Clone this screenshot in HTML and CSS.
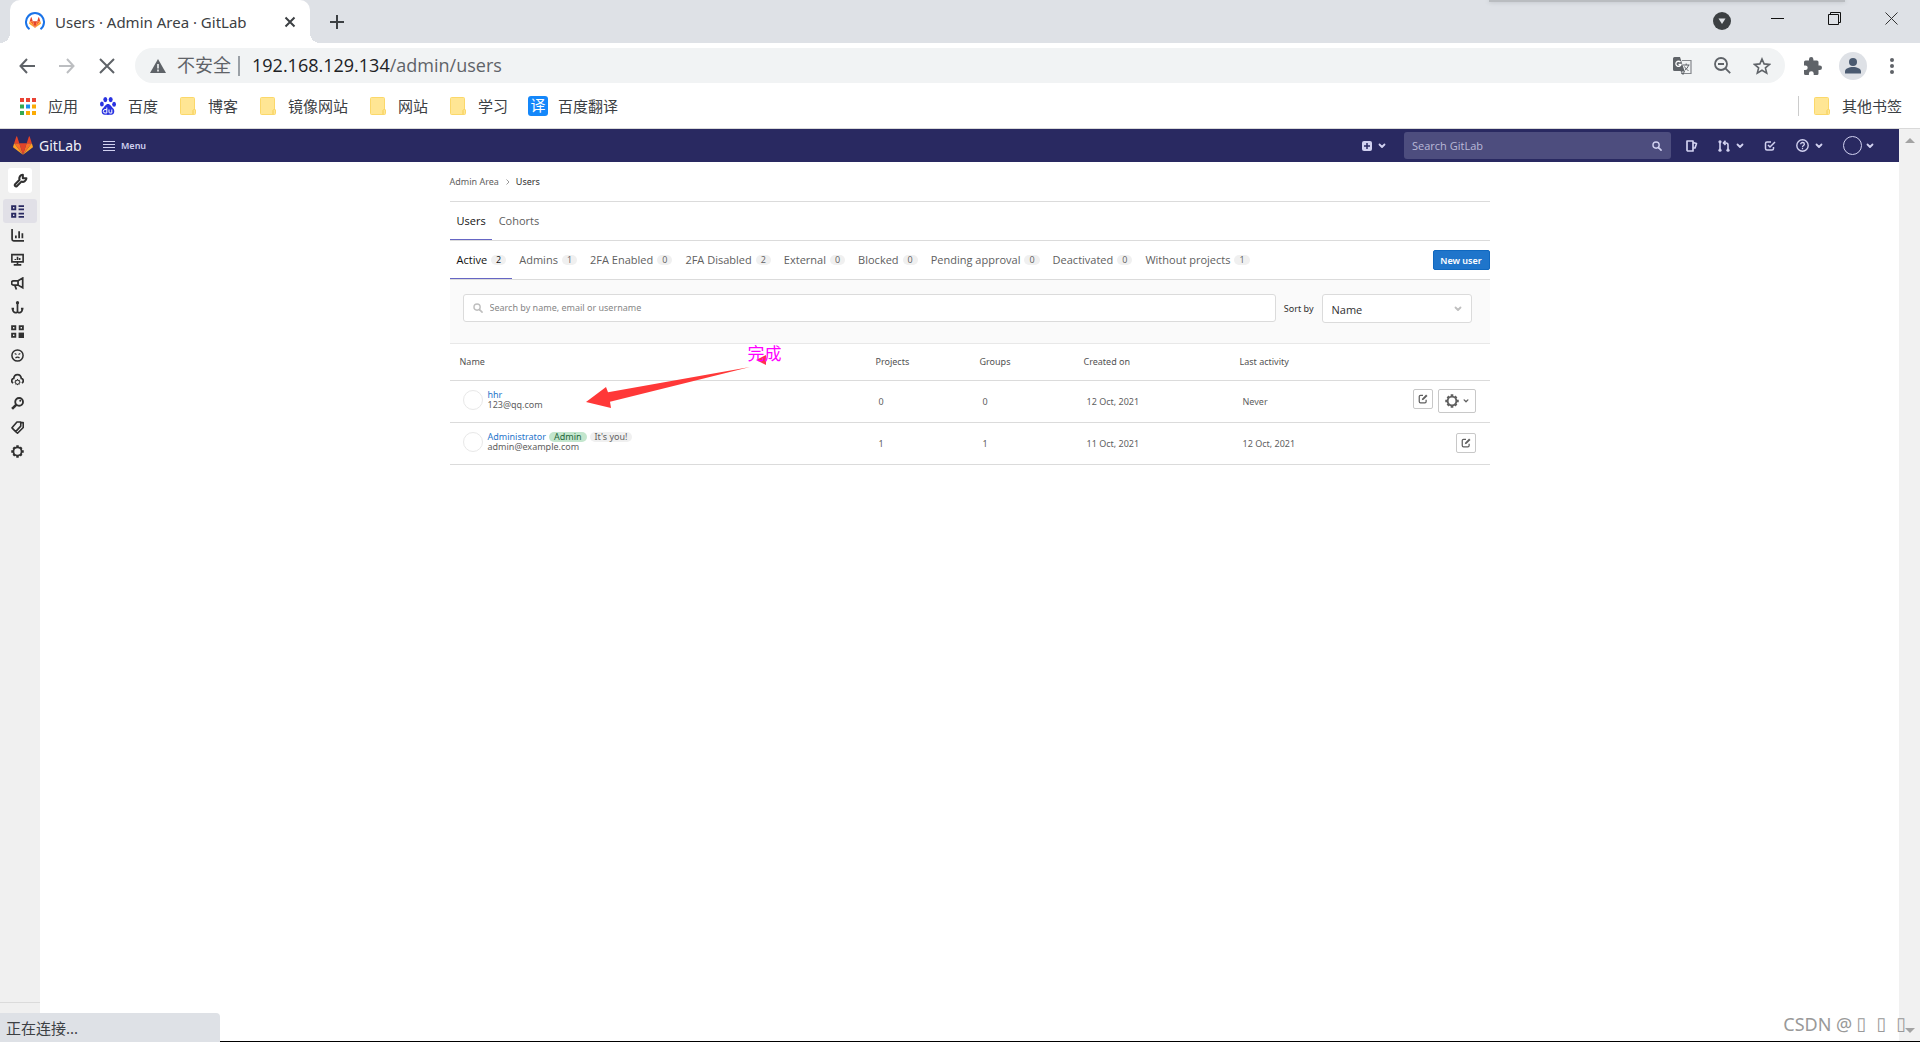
FILE: index.html
```html
<!DOCTYPE html>
<html lang="zh-CN">
<head>
<meta charset="utf-8">
<title>Users · Admin Area · GitLab</title>
<link rel="stylesheet" href="styles.css">
</head>
<body>
<svg class="defs" aria-hidden="true">
  <defs>
    <symbol id="tanuki" viewBox="0 0 24 22">
      <path fill="#e24329" d="M12 22 7.600 8.400h8.800z"/>
      <path fill="#fc6d26" d="M12 22 7.600 8.400H1.400zM12 22l4.400-13.600h6.200z"/>
      <path fill="#fca326" d="M1.400 8.400.1 12.500a.9.900 0 0 0 .3 1L12 22zM22.600 8.400l1.300 4.100a.9.900 0 0 1-.3 1L12 22z"/>
      <path fill="#e24329" d="M1.400 8.400h6.200L4.900.3a.5.5 0 0 0-.9 0zM22.600 8.400h-6.200L19.100.3a.5.5 0 0 1 .9 0z"/>
    </symbol>
    <symbol id="chevron" viewBox="0 0 8 8"><path d="M1.500 2.500 4 5l2.500-2.500" fill="none" stroke="currentColor" stroke-width="1.800" stroke-linecap="round" stroke-linejoin="round"/></symbol>
    <symbol id="folder" viewBox="0 0 16 18"><path fill="#ffe694" stroke="#fbd86a" d="M1.500.5h12a1 1 0 0 1 1 1v10.500l1 1v3.500a1 1 0 0 1-1 1h-13a1 1 0 0 1-1-1v-15a1 1 0 0 1 1-1z"/><path fill="none" stroke="#f4cc52" d="M13 17v-3.500l1.500-1.500"/></symbol>
    <symbol id="search" viewBox="0 0 16 16"><circle cx="6.500" cy="6.500" r="5" fill="none" stroke="currentColor" stroke-width="2.200"/><path d="m10.500 10.500 4 4" stroke="currentColor" stroke-width="2.600" stroke-linecap="round"/></symbol>
    <symbol id="edit" viewBox="0 0 16 16"><path d="M8 2H4a2 2 0 0 0-2 2v8a2 2 0 0 0 2 2h7a2 2 0 0 0 2-2V9" fill="none" stroke="currentColor" stroke-width="2"/><path d="M13 .8 15.200 3 9 9.200l-3 .8.800-3z" fill="currentColor"/></symbol>
    <symbol id="gear" viewBox="0 0 16 16"><circle cx="8" cy="8" r="5" fill="none" stroke="currentColor" stroke-width="2.200"/><path d="M8 .3v3M8 12.700v3M.3 8h3M12.700 8h3M2.900 2.900l1.600 1.600M11.500 11.500l1.600 1.600M13.100 2.900l-1.600 1.600M4.500 11.500l-1.600 1.600" stroke="currentColor" stroke-width="3"/></symbol>
  </defs>
</svg>

<div class="window">
  <header class="tabstrip">
    <div class="tab">
      <svg class="favicon" viewBox="0 0 20 20"><path d="M4.500 17.200a9 9 0 1 1 11 0" fill="none" stroke="#1a73e8" stroke-width="2"/><use href="#tanuki" x="4" y="5" width="12" height="11"/></svg>
      <span class="tab-title">Users · Admin Area · GitLab</span>
      <button class="plain" aria-label="Close tab"><svg width="12" height="12" viewBox="0 0 12 12"><path d="m1.500 1.500 9 9M10.500 1.500l-9 9" stroke="#3c4043" stroke-width="2"/></svg></button>
    </div>
    <button class="plain newtab" aria-label="New tab"><svg width="16" height="16" viewBox="0 0 16 16"><path d="M8 1v14M1 8h14" stroke="#3c4043" stroke-width="2"/></svg></button>
    <div class="window-buttons">
      <button class="plain tab-search" aria-label="Search tabs"><svg width="18" height="18" viewBox="0 0 18 18"><circle cx="9" cy="9" r="9" fill="#3c4043"/><path d="M5.500 6.500h7L9 12z" fill="#dee1e6"/></svg></button>
      <button class="plain" aria-label="Minimize"><svg width="13" height="13" viewBox="0 0 13 13"><path d="M0 6.500h13" stroke="#111"/></svg></button>
      <button class="plain" aria-label="Restore"><svg width="13" height="13" viewBox="0 0 13 13"><path d="M.5 2.500h10v10H.5zM2.500 2.500v-2h10v10h-2" fill="none" stroke="#111"/></svg></button>
      <button class="plain" aria-label="Close"><svg width="13" height="13" viewBox="0 0 13 13"><path d="m.5.5 12 12M12.500.5l-12 12" stroke="#333"/></svg></button>
    </div>
    <div class="top-shadow"></div>
  </header>

  <div class="toolbar">
    <div class="nav-buttons">
      <button class="plain" aria-label="Back"><svg width="16" height="16" viewBox="0 0 16 16"><path d="M16 8H1.500M8 1 1.500 8 8 15" fill="none" stroke="#5f6368" stroke-width="2"/></svg></button>
      <button class="plain" aria-label="Forward"><svg width="16" height="16" viewBox="0 0 16 16"><path d="M0 8h14.500M8 1l6.500 7L8 15" fill="none" stroke="#bcbec1" stroke-width="2"/></svg></button>
      <button class="plain" aria-label="Stop"><svg width="16" height="16" viewBox="0 0 16 16"><path d="m1 1 14 14M15 1 1 15" stroke="#5f6368" stroke-width="2"/></svg></button>
    </div>
    <div class="omnibox">
      <svg width="16" height="14" viewBox="0 0 16 14"><path d="M8 0l8 14H0z" fill="#5f6368"/><path d="M8 5v4.500M8 10.500v2" stroke="#f1f3f4" stroke-width="1.600"/></svg>
      <span class="insecure">不安全</span>
      <span class="url-divider"></span>
      <span class="url"><b>192.168.129.134</b>/admin/users</span>
      <div class="omnibox-icons">
        <svg width="19" height="18" viewBox="0 0 19 18"><path d="M9 3.500h9v13H8" fill="#f1f3f4" stroke="#85888c" stroke-width="1.200"/><path d="M0 1.500A1.500 1.500 0 0 1 1.500 0H7l4.500 14H1.500A1.500 1.500 0 0 1 0 12.500z" fill="#5f6368"/><path d="M7.500 5.200A2.600 2.600 0 1 0 8 7.500H5.500" fill="none" stroke="#fff" stroke-width="1.300"/><path d="M10 8h6.500M13.200 6.500V8M15.500 8c-.5 2.500-2 4-3.500 5M11.500 9.500c1 2 2.500 3.500 4 4M8 14l2 3.500 1.500-3.500z" fill="none" stroke="#5f6368"/></svg>
        <svg width="17" height="17" viewBox="0 0 17 17"><circle cx="7" cy="7" r="6" fill="none" stroke="#5f6368" stroke-width="1.800"/><path d="M4 7h6M11.200 11.200l5 5" stroke="#5f6368" stroke-width="1.800"/></svg>
        <svg width="18" height="18" viewBox="0 0 18 18"><path d="m9 2 2.100 4.900 5.400.5-4.100 3.500 1.300 5.200L9 13.300l-4.700 2.800 1.300-5.200-4.100-3.500 5.400-.5z" fill="none" stroke="#5f6368" stroke-width="1.600"/></svg>
      </div>
    </div>
    <div class="toolbar-end">
      <button class="plain" aria-label="Extensions"><svg width="18" height="18" viewBox="0 0 18 18"><path d="M0 5a1.500 1.500 0 0 1 1.500-1.500H5V2.200a2.200 2.200 0 0 1 4.400 0v1.300H13A1.500 1.500 0 0 1 14.500 5v3.500h1.300a2.200 2.200 0 0 1 0 4.400h-1.300v3.600A1.500 1.500 0 0 1 13 18H9.700v-1.400a2.400 2.400 0 0 0-4.800 0V18H1.500A1.500 1.500 0 0 1 0 16.500v-3.400h1.400a2.300 2.300 0 0 0 0-4.600H0z" fill="#5f6368"/></svg></button>
      <button class="plain" aria-label="Profile"><svg width="28" height="28" viewBox="0 0 28 28"><circle cx="14" cy="14" r="14" fill="#dee1e6"/><circle cx="14" cy="10" r="4" fill="#4a5a70"/><path d="M6 21.500v-2c0-3 4-4.500 8-4.500s8 1.500 8 4.500v2z" fill="#4a5a70"/></svg></button>
      <button class="plain" aria-label="Browser menu"><svg width="4" height="16" viewBox="0 0 4 16"><circle cx="2" cy="2" r="2" fill="#5f6368"/><circle cx="2" cy="8" r="2" fill="#5f6368"/><circle cx="2" cy="14" r="2" fill="#5f6368"/></svg></button>
    </div>
  </div>

  <nav class="bookmarks" aria-label="Bookmarks">
    <a href="#"><svg width="16" height="17" viewBox="0 0 16 17"><path fill="#ea4335" d="M0 0h4v4H0zM6 0h4v4H6zM12 0h4v4h-4z"/><path fill="#34a853" d="M0 6.500h4v4H0zM0 13h4v4H0z"/><path fill="#1a8cf0" d="M6 6.500h4v4H6z"/><path fill="#fbab05" d="M12 6.500h4v4h-4zM6 13h4v4H6zM12 13h4v4h-4z"/></svg>应用</a>
    <a href="#"><svg width="16" height="18" viewBox="0 0 16 18"><g fill="#2932e1"><ellipse cx="5.300" cy="2.600" rx="2" ry="2.600"/><ellipse cx="10.700" cy="2.600" rx="2" ry="2.600"/><ellipse cx="1.900" cy="7" rx="1.900" ry="2.500"/><ellipse cx="14.100" cy="7.200" rx="1.900" ry="2.500"/><path d="M8 7c2.500 0 3 2.500 5 4.200 2.200 2 1.500 6.300-1.500 6.600-1.500.1-5.500.1-7 0-3-.3-3.700-4.600-1.500-6.600C5 9.500 5.500 7 8 7z"/></g><path d="M6.800 10.500v5.500H5a1.400 1.400 0 0 1 0-3.400h1.800M9 12.500v2.500c0 .8.400 1 1 1h1.800v-3.500" fill="none" stroke="#fff"/></svg>百度</a>
    <a href="#"><svg width="16" height="18"><use href="#folder"/></svg>博客</a>
    <a href="#"><svg width="16" height="18"><use href="#folder"/></svg>镜像网站</a>
    <a href="#"><svg width="16" height="18"><use href="#folder"/></svg>网站</a>
    <a href="#"><svg width="16" height="18"><use href="#folder"/></svg>学习</a>
    <a href="#" class="translate"><span class="yi">译</span>百度翻译</a>
    <a href="#" class="other"><svg width="16" height="18"><use href="#folder"/></svg>其他书签</a>
  </nav>

  <div class="viewport">
    <div class="app">
      <header class="navbar">
        <a href="#" class="brand"><svg width="20" height="19"><use href="#tanuki"/></svg>GitLab</a>
        <button class="menu"><svg width="12" height="10" viewBox="0 0 12 10"><path d="M0 .5h12M0 3.500h12M0 6.500h12M0 9.500h12" stroke="currentColor" stroke-width="1.200"/></svg>Menu</button>
        <div class="navbar-end">
          <button class="drop" aria-label="New"><svg width="10" height="10" viewBox="0 0 10 10"><rect width="10" height="10" rx="2" fill="currentColor"/><path d="M5 2v6M2 5h6" stroke="#292961" stroke-width="1.500"/></svg><svg class="chev"><use href="#chevron"/></svg></button>
          <label class="nav-search"><input type="text" placeholder="Search GitLab" aria-label="Search GitLab"><svg width="10" height="10"><use href="#search"/></svg></label>
          <div class="nav-icons">
            <a href="#" aria-label="Issues"><svg width="12" height="12" viewBox="0 0 12 12"><path d="M1 1h6v10H2a1 1 0 0 1-1-1zM7 2.500l3.500 1L9 8H7" fill="none" stroke="currentColor" stroke-width="1.700" stroke-linejoin="round"/></svg></a>
            <button class="drop" aria-label="Merge requests"><svg width="12" height="12" viewBox="0 0 12 12"><path d="M2 2v8M10 10V5a2 2 0 0 0-2-2H6M7.500.8 5.500 3l2 2" fill="none" stroke="currentColor" stroke-width="1.600"/><circle cx="2" cy="1.800" r="1.600" fill="currentColor"/><circle cx="2" cy="10.200" r="1.600" fill="currentColor"/><circle cx="10" cy="10.200" r="1.600" fill="currentColor"/></svg><svg class="chev"><use href="#chevron"/></svg></button>
            <a href="#" aria-label="To-Do List"><svg width="12" height="12" viewBox="0 0 12 12"><path d="M7 2H3a1.500 1.500 0 0 0-1.500 1.500v5A1.500 1.500 0 0 0 3 10h5a1.500 1.500 0 0 0 1.500-1.500V7M4 5l2 2 5-5" fill="none" stroke="currentColor" stroke-width="1.500"/></svg></a>
            <button class="drop" aria-label="Help"><svg width="13" height="13" viewBox="0 0 13 13"><circle cx="6.500" cy="6.500" r="5.700" fill="none" stroke="currentColor" stroke-width="1.400"/><path d="M4.700 5.200c0-2.300 3.700-2.200 3.700 0 0 1.400-1.900 1.200-1.900 2.700M6.500 8.800v1.400" fill="none" stroke="currentColor" stroke-width="1.300"/></svg><svg class="chev"><use href="#chevron"/></svg></button>
            <button class="drop account" aria-label="Account"><span class="me"></span><svg class="chev"><use href="#chevron"/></svg></button>
          </div>
        </div>
      </header>

      <div class="body">
        <nav class="sidebar" aria-label="Admin">
          <a href="#" class="context" aria-label="Admin Area"><svg viewBox="0 0 16 16"><path d="M10.500 5.500v-3.700A4 4 0 0 0 7 7.200L2 12.200A1.500 1.500 0 0 0 4 14.200l5-5a4 4 0 0 0 5.300-3.700h-3.800z" fill="none" stroke="currentColor" stroke-width="2.200" stroke-linejoin="round"/></svg></a>
          <a href="#" class="active" aria-label="Overview"><svg viewBox="0 0 12 12"><path d="M1 1h3v3H1zM1 8h3v3H1z" fill="none" stroke="currentColor" stroke-width="1.700"/><path d="M7 1h5M7 4h5M7 8h5M7 11h5" stroke="currentColor" stroke-width="1.500"/></svg></a>
          <a href="#" aria-label="Analytics"><svg viewBox="0 0 12 12"><path d="M1 0v9.500a1.500 1.500 0 0 0 1.500 1.500H12M4.500 8.500V6M7.500 8.500V2M10.500 8.500V4" fill="none" stroke="currentColor" stroke-width="1.600"/></svg></a>
          <a href="#" aria-label="Monitoring"><svg viewBox="0 0 12 12"><path d="M.8 1.500h10.400v6.700H.8zM6 8v3M2.500 11h7M4 6.500V5.500M6 6.500v-3M8 6.500V4.500" fill="none" stroke="currentColor" stroke-width="1.500"/></svg></a>
          <a href="#" aria-label="Messages"><svg viewBox="0 0 12 12"><path d="M10.800 1v9L6.500 7.500V3.500zM6.500 3.500H2.500a1.500 1.500 0 0 0 0 4h4M3.500 7.500 5 11.500" fill="none" stroke="currentColor" stroke-width="1.600"/></svg></a>
          <a href="#" aria-label="System hooks"><svg viewBox="0 0 12 12"><path d="M6 2v8.500M.5 7h2.300M11.500 7H9.200M1.500 7c0 4.500 4.500 4.500 4.500 2.500 0 2 4.500 2 4.500-2.500" fill="none" stroke="currentColor" stroke-width="1.600"/><circle cx="6" cy="1.500" r="1.500" fill="currentColor"/></svg></a>
          <a href="#" aria-label="Applications"><svg viewBox="0 0 12 12"><path d="M1 1h3v3H1zM8 1h3v3H8zM1 8h3v3H1z" fill="none" stroke="currentColor" stroke-width="1.700"/><path d="M7 7h5v5H7z" fill="currentColor"/></svg></a>
          <a href="#" aria-label="Abuse reports"><svg viewBox="0 0 13 13"><circle cx="6.500" cy="6.500" r="5.600" fill="none" stroke="currentColor" stroke-width="1.500"/><path d="M3.700 4.500 5.500 5.500M9.300 4.500 7.500 5.500M4.500 9.200c1-1.500 3-1.500 4 0" fill="none" stroke="currentColor" stroke-width="1.200"/></svg></a>
          <a href="#" aria-label="Kubernetes"><svg viewBox="0 0 12 12"><path d="M2 9.300C0 8.300.3 5.300 2.500 5 3 .2 9 .2 9.500 5c2.200.3 2.500 3.300.5 4.300" fill="none" stroke="currentColor" stroke-width="1.600"/><use href="#gear" x="3" y="5.500" width="6" height="6"/></svg></a>
          <a href="#" aria-label="Deploy keys"><svg viewBox="0 0 12 12"><circle cx="7.500" cy="4.500" r="3.600" fill="none" stroke="currentColor" stroke-width="1.700"/><path d="M5 7 1 11" stroke="currentColor" stroke-width="2.400"/><circle cx="8.500" cy="3.500" r=".9" fill="currentColor"/></svg></a>
          <a href="#" aria-label="Labels"><svg viewBox="0 0 12 12"><path d="M5.500.9H9v3.800L4.300 9.800.9 6.300zM9.500 1.500h1.800V6L6 11.300 4.300 9.800" fill="none" stroke="currentColor" stroke-width="1.500" stroke-linejoin="round"/></svg></a>
          <a href="#" aria-label="Settings"><svg viewBox="0 0 16 16"><use href="#gear"/></svg></a>
          <button class="collapse" aria-label="Collapse sidebar"></button>
        </nav>

        <main class="content">
          <nav class="crumbs" aria-label="Breadcrumb"><a href="#">Admin Area</a><svg width="5" height="6" viewBox="0 0 5 6"><path d="m1.500.5 2.500 2.500-2.500 2.500" fill="none" stroke="#999"/></svg><a href="#" class="here">Users</a></nav>
          <nav class="tabs" aria-label="Sections"><a href="#" class="on">Users</a><a href="#">Cohorts</a></nav>
          <div class="filters">
            <nav class="tabs" aria-label="Filters">
              <a href="#" class="on">Active <span class="count">2</span></a>
              <a href="#">Admins <span class="count">1</span></a>
              <a href="#">2FA Enabled <span class="count">0</span></a>
              <a href="#">2FA Disabled <span class="count">2</span></a>
              <a href="#">External <span class="count">0</span></a>
              <a href="#">Blocked <span class="count">0</span></a>
              <a href="#">Pending approval <span class="count">0</span></a>
              <a href="#">Deactivated <span class="count">0</span></a>
              <a href="#">Without projects <span class="count">1</span></a>
            </nav>
            <button class="new-user">New user</button>
          </div>
          <form class="search-row">
            <label class="search-box"><svg width="10" height="10"><use href="#search"/></svg><input type="text" placeholder="Search by name, email or username" aria-label="Search users"></label>
            <label for="sort">Sort by</label>
            <div class="sort"><select id="sort"><option>Name</option></select><svg class="chev"><use href="#chevron"/></svg></div>
          </form>
          <table class="users">
            <colgroup><col class="w40"><col class="w10"><col class="w10"><col class="w15"><col class="w15"><col class="w10"></colgroup>
            <thead><tr><th>Name</th><th>Projects</th><th>Groups</th><th>Created on</th><th>Last activity</th><th></th></tr></thead>
            <tbody>
              <tr>
                <td class="who"><div class="user"><span class="avatar"></span><div><div class="line"><a href="#">hhr</a></div><div class="line">123@qq.com</div></div></div></td>
                <td>0</td><td>0</td><td>12 Oct, 2021</td><td>Never</td>
                <td class="act"><div class="actions"><button class="box" aria-label="Edit"><svg width="10" height="10"><use href="#edit"/></svg></button><button class="box wide" aria-label="User administration"><svg width="14" height="14"><use href="#gear"/></svg><svg class="chev small"><use href="#chevron"/></svg></button></div></td>
              </tr>
              <tr>
                <td class="who"><div class="user"><span class="avatar"></span><div><div class="line"><a href="#">Administrator</a><span class="badge green">Admin</span><span class="badge">It's you!</span></div><div class="line">admin@example.com</div></div></div></td>
                <td>1</td><td>1</td><td>11 Oct, 2021</td><td>12 Oct, 2021</td>
                <td class="act"><div class="actions"><button class="box" aria-label="Edit"><svg width="10" height="10"><use href="#edit"/></svg></button></div></td>
              </tr>
            </tbody>
          </table>
          <div class="annotation">
            <svg width="180" height="68" viewBox="0 0 180 68"><path d="M164 27 22 52.300 20 47 0 62l25 6-1-6.300z" fill="#ff3838"/><path d="m170 20 10-5v10z" fill="#ff3050"/></svg>
            <span>完成</span>
          </div>
        </main>
      </div>
    </div>
    <div class="scrollbar"><i class="up"></i><i class="down"></i></div>
    <div class="status">正在连接...</div>
    <div class="watermark">CSDN @<span>▯</span><span>▯</span><span>▯</span></div>
  </div>
</div>
</body>
</html>
```
FILE: styles.css
```css
* { box-sizing: border-box; }
body {
  margin: 0;
  background: #fff;
  font-family: "Noto Sans", "Noto Sans CJK SC", sans-serif;
  font-size: 9px;
  color: #606060;
}
a { color: inherit; text-decoration: none; }
button, input, select { font: inherit; color: inherit; margin: 0; }
svg { flex: none; display: block; }
.defs { position: absolute; width: 0; height: 0; }
.plain { border: 0; padding: 0; background: none; display: flex; }
.window { display: flex; flex-direction: column; min-height: 100vh; }

/* Browser tab strip */
.tabstrip { position: relative; display: flex; height: 43px; background: #dee1e6; padding-left: 10px; overflow: hidden; }
.tab { position: relative; display: flex; align-items: center; width: 300px; padding: 0 14px 0 15px; background: #fff; border-radius: 10px 10px 0 0; }
.tab::before, .tab::after { content: ""; position: absolute; bottom: 0; width: 10px; height: 10px; }
.tab::before { left: -10px; background: radial-gradient(circle at 0 0, transparent 10px, #fff 10px); }
.tab::after { right: -10px; background: radial-gradient(circle at 100% 0, transparent 10px, #fff 10px); }
.favicon { width: 20px; height: 20px; margin-right: 10px; }
.tab-title { flex: 1; font-size: 15px; color: #3c4043; white-space: nowrap; }
.newtab { margin-left: 19px; align-items: center; }
.window-buttons { display: flex; gap: 44px; margin-left: auto; padding: 12px 22px 0 0; }
.window-buttons .plain { height: 18px; }
.window-buttons .tab-search { margin-right: -4px; }
.top-shadow { position: absolute; top: 0; right: 75px; width: 356px; height: 2px; background: #b9bcc0; box-shadow: 0 0 4px #b0b3b8; }

/* Address bar */
.toolbar { display: flex; align-items: center; height: 45px; padding: 0 26px 0 19px; }
.nav-buttons { display: flex; gap: 24px; width: 116px; }
.omnibox { display: flex; flex: 1; align-items: center; height: 35px; padding: 0 14px 0 15px; border-radius: 18px; background: #f1f3f4; font-family: "Open Sans", "Noto Sans CJK SC", sans-serif; font-size: 18px; color: #5f6368; white-space: nowrap; }
.insecure, .url { padding-bottom: 2px; line-height: 24px; }
.insecure { margin-left: 11px; }
.url-divider { width: 2px; height: 20px; margin: 0 12px 0 7px; background: #9aa0a6; }
.url b { color: #202124; font-weight: 400; }
.omnibox-icons { display: flex; align-items: center; gap: 22px; margin-left: auto; }
.toolbar-end { display: flex; align-items: center; gap: 17px; margin-left: 19px; }
.toolbar-end .plain:last-child { margin-left: 6px; }

/* Bookmarks */
.bookmarks { display: flex; align-items: center; gap: 22px; height: 41px; padding: 0 18px 4px 20px; border-bottom: 1px solid #d9d9d9; font-size: 15px; color: #3c4043; }
.bookmarks a { display: flex; align-items: center; gap: 12px; line-height: 20px; }
.bookmarks .translate { gap: 10px; margin-left: -2px; }
.yi { width: 20px; height: 20px; border-radius: 3px; background: #1487fa; color: #fff; text-align: center; font-size: 15px; line-height: 19px; }
.bookmarks .other { margin-left: auto; padding-left: 15px; border-left: 1px solid #ccc; }

/* Page area */
.viewport { position: relative; display: flex; flex: 1; border-bottom: 1px solid #000; }
.app { display: flex; flex-direction: column; flex: 1; }
.scrollbar { display: flex; flex-direction: column; justify-content: space-between; align-items: center; width: 21px; padding: 9px 0 8px; background: #f1f1f1; }
.scrollbar i { border: 5px solid transparent; }
.scrollbar .up { border-top: 0; border-bottom-color: #a3a3a3; }
.scrollbar .down { border-bottom: 0; border-top-color: #a3a3a3; }

/* GitLab navbar */
.navbar { display: flex; align-items: center; height: 33px; padding: 0 25px 0 13px; background: #292961; color: #d1d1f0; }
.brand { display: flex; align-items: center; gap: 6px; width: 90px; color: #f0f0f8; font-size: 14px; }
.menu { display: flex; align-items: center; gap: 6px; padding: 0; border: 0; background: none; font-weight: 600; }
.navbar-end { display: flex; align-items: center; margin-left: auto; }
.drop { display: flex; align-items: center; gap: 6px; padding: 0; border: 0; background: none; }
.chev { width: 8px; height: 8px; }
.nav-search { display: flex; align-items: center; width: 267px; height: 27px; margin: 0 15px 0 18px; padding: 0 9px 0 8px; border-radius: 3px; background: #4d4d7e; font-family: "Open Sans", sans-serif; }
.nav-search input { flex: 1; min-width: 0; padding: 0; border: 0; outline: 0; background: none; font-size: 11px; }
.nav-search input::placeholder { color: #b9b9d8; opacity: 1; }
.nav-icons { display: flex; align-items: center; gap: 20px; }
.me { width: 19px; height: 19px; border: 1px solid #d1d1f0; border-radius: 50%; }
.account { gap: 4px; }

/* GitLab sidebar */
.body { display: flex; flex: 1; }
.sidebar { display: flex; flex-direction: column; width: 40px; background: #f0f0f0; color: #303030; }
.sidebar a { display: flex; align-items: center; height: 24px; margin: 0 3px; padding-left: 8px; border-radius: 3px; }
.sidebar svg { width: 13px; height: 13px; }
.sidebar .context { height: 25px; margin: 6px 8px; padding-left: 5px; background: #fff; }
.sidebar .context svg { width: 15px; height: 15px; }
.sidebar .active { background: #e1e0e7; color: #292961; }
.collapse { height: 39px; margin-top: auto; border: 0; border-top: 1px solid #dbdbdb; background: none; }

/* Users page */
.content { position: relative; width: 100%; max-width: 1040px; margin: 0 auto; }
.crumbs { display: flex; align-items: center; gap: 6px; height: 40px; border-bottom: 1px solid #dbdbdb; }
.crumbs .here { color: #303030; }
.tabs { display: flex; height: 39px; border-bottom: 1px solid #dbdbdb; font-family: "Open Sans", sans-serif; font-size: 11px; }
.tabs a { display: flex; align-items: center; gap: 4px; height: 38px; padding: 0 6px 0 7px; border-bottom: 1px solid transparent; white-space: nowrap; }
.tabs .on { border-color: #6666c4; color: #111; }
.count { padding: 0 5px; border-radius: 5px; background: #f0f0f0; font-size: 9px; line-height: 10px; }
.filters { display: flex; align-items: center; border-bottom: 1px solid #dbdbdb; height: 39px; }
.filters .tabs { height: 38px; border: 0; }
.new-user { width: 57px; height: 20px; margin-left: auto; padding: 0; border: 1px solid #1068bf; border-radius: 2px; background: #1f75cb; color: #fff; font-weight: 600; white-space: nowrap; }
.search-row { display: flex; align-items: flex-start; gap: 8px; height: 64px; padding: 14px 18px 0 13px; border-bottom: 1px solid #e8e8e8; background: #fafafa; color: #303030; line-height: 30px; }
.search-box { display: flex; align-items: center; flex: 1; gap: 7px; height: 28px; padding: 0 9px; border: 1px solid #dbdbdb; border-radius: 3px; background: #fff; color: #bfbfbf; }
.search-box input { flex: 1; padding: 0; border: 0; outline: 0; background: none; line-height: 16px; }
.search-box input::placeholder { color: #868686; opacity: 1; }
.sort { display: flex; align-items: center; width: 150px; height: 29px; padding-right: 9px; border: 1px solid #dbdbdb; border-radius: 3px; background: #fff; color: #bfbfbf; }
.sort select { flex: 1; height: 27px; padding: 0 9px 2px; border: 0; appearance: none; background: none; color: #303030; font-family: "Open Sans", sans-serif; font-size: 11px; }
.users { width: 100%; border-collapse: collapse; table-layout: fixed; }
.w40 { width: 40%; }
.w15 { width: 15%; }
.w10 { width: 10%; }
.users tr { border-bottom: 1px solid #dbdbdb; }
.users th { height: 36px; padding: 0 10px; text-align: left; font-weight: 400; color: #525252; }
.users td { height: 42px; padding: 0 13px; }
.users .who { padding-bottom: 3px; }
.users .act { padding-right: 14px; }
.user { display: flex; align-items: center; gap: 5px; }
.avatar { width: 20px; height: 20px; border: 1px solid #e8e8e8; border-radius: 50%; }
.line { display: flex; align-items: center; gap: 3px; height: 10px; line-height: 10px; white-space: nowrap; }
.line a { color: #1f75cb; }
.badge { padding: 0 5px; border-radius: 5px; background: #f0f0f0; }
.badge.green { background: #c3e6cd; color: #24663b; }
.actions { display: flex; justify-content: flex-end; gap: 5px; }
.box { display: flex; align-items: center; justify-content: center; gap: 4px; width: 20px; height: 20px; padding: 0; border: 1px solid #c8c8c8; border-radius: 2px; background: #fff; }
.box.wide { width: 38px; height: 24px; }
.chev.small { width: 6px; height: 6px; }

/* Overlays */
.annotation { position: absolute; top: 178px; left: 136px; width: 196px; }
.annotation span { position: absolute; top: 0; right: 0; color: #f0f; font-size: 17px; line-height: 28px; }
.status { position: absolute; left: 0; bottom: -1px; width: 220px; height: 29px; padding-left: 6px; border-radius: 0 4px 0 0; background: #dee1e6; color: #3c4043; font-size: 15px; line-height: 31px; }
.watermark { position: absolute; right: 14px; bottom: 4px; display: flex; gap: 10px; color: #999; font-size: 18px; line-height: 26px; }
.watermark span { font-family: "DejaVu Sans", sans-serif; }
.watermark span:first-child { margin-left: -6px; }
```
